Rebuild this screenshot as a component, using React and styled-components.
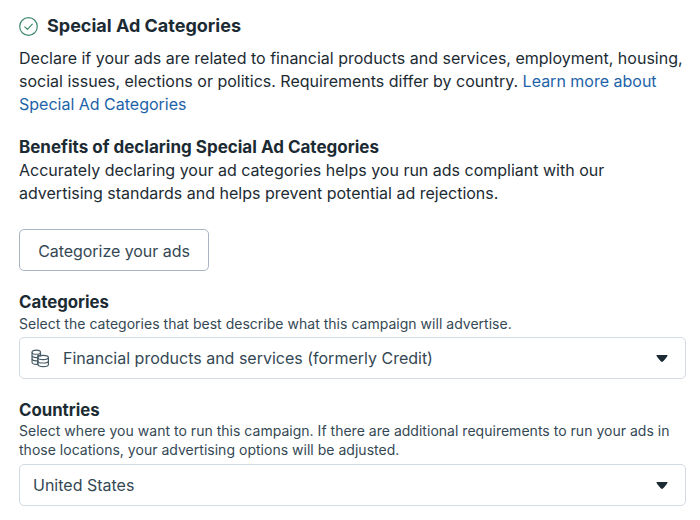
import React from 'react'
import styled, { createGlobalStyle } from 'styled-components'

const GlobalStyle = createGlobalStyle`
  html, body {
    margin: 0;
    background: #fff;
  }
  body {
    font-family: Inter, "Liberation Sans", sans-serif;
    color: #1c2b33;
  }
`

const CheckIcon = () => (
  <svg width="19" height="19" viewBox="0 0 19 19" fill="none">
    <circle cx="9.5" cy="9.5" r="8.8" stroke="#3f8a6c" strokeWidth="1.2" />
    <path d="M5.800 9.800l2.600 2.600 4.900-5.200" stroke="#3f8a6c" strokeWidth="1.200" strokeLinecap="round" strokeLinejoin="round" />
  </svg>
)

const CoinsIcon = () => (
  <svg width="19" height="19" viewBox="0 0 18 18" fill="none" stroke="#465a66" strokeWidth="1.1">
    <path d="M1 3C1 1.800 2.900 1 5 1s4 .8 4 2v3.200H6.500v8.300H5c-2.100 0-4-.8-4-2V3z" />
    <path d="M1 3c0 1.200 1.900 2 4 2s4-.8 4-2M1 6.200c0 1.100 1.900 1.900 4 1.900h1.500M1 9.300c0 1.100 1.900 1.900 4 1.900h1.500" />
    <path d="M6.500 8c0-1.200 2.100-2 5-2s5 .8 5 2v6.700c0 1.200-2.100 2-5 2s-5-.8-5-2V8z" />
    <path d="M6.500 8c0 1.200 2.100 2 5 2s5-.8 5-2M6.500 11.300c0 1.200 2.100 2 5 2s5-.8 5-2" />
  </svg>
)

const CaretIcon = () => (
  <svg width="12" height="7" viewBox="0 0 12 7">
    <path d="M.6 1.100C.3.500.6 0 1.200 0h9.600c.6 0 .9.500.6 1.100-.8 1.300-2.900 4.200-4.500 5.500-.5.400-1.300.4-1.800 0C3.500 5.300 1.400 2.400.6 1.100z" fill="#1c2b33" />
  </svg>
)

const Page = styled.div`
  width: 700px;
  height: 520px;
  overflow: hidden;
  box-sizing: border-box;
  padding: 15px 14px 0 19px;
`
const Header = styled.div`
  display: flex;
  align-items: center;
  gap: 9px;
  height: 22px;
`
const Title = styled.h2`
  margin: 0;
  font-size: 18px;
  line-height: 22px;
  font-weight: 700;
`
const Paragraph = styled.p`
  margin: ${props => props.$top || 0}px 0 0;
  max-width: ${props => props.$max || 667}px;
  font-size: 16px;
  line-height: 23px;
`
const Link = styled.a`
  color: #1d63a8;
  text-decoration: none;
`
const SubHeading = styled.h3`
  margin: 20px 0 0;
  font-size: 17px;
  line-height: 23px;
  font-weight: 700;
`
const Button = styled.button`
  display: block;
  margin-top: 24px;
  width: 190px;
  height: 42px;
  padding: 1px 0 0;
  background: #fff;
  border: 1px solid #a9b5c4;
  border-radius: 5px;
  font-family: inherit;
  font-size: 16px;
  font-weight: 400;
  letter-spacing: -0.05px;
  color: #344854;
`
const Field = styled.section`
  margin-top: ${props => props.$top}px;
`
const Label = styled.div`
  font-size: 16.8px;
  line-height: 20px;
  font-weight: 700;
`
const Hint = styled.div`
  margin-top: ${props => props.$top}px;
  font-size: 14px;
  line-height: 19px;
  letter-spacing: 0.02px;
  color: #344854;
`
const Select = styled.div`
  display: flex;
  align-items: center;
  gap: 13px;
  height: 40px;
  margin-top: ${props => props.$top}px;
  padding: 0 17px 0 ${props => props.$pad}px;
  border: 1px solid #d4dae2;
  border-radius: 5px;
  font-size: 16px;
  color: #344854;
`
const SelectText = styled.span`
  flex: 1;
`

export default function App() {
  return (
    <Page>
      <GlobalStyle />
      <Header>
        <CheckIcon />
        <Title>Special Ad Categories</Title>
      </Header>
      <Paragraph $top={10}>
        Declare if your ads are related to financial products and services, employment, housing,
        social issues, elections or politics. Requirements differ by country.{' '}
        <Link>Learn more about Special Ad Categories</Link>
      </Paragraph>
      <SubHeading>Benefits of declaring Special Ad Categories</SubHeading>
      <Paragraph $max={640}>
        Accurately declaring your ad categories helps you run ads compliant with our
        advertising standards and helps prevent potential ad rejections.
      </Paragraph>
      <Button>Categorize your ads</Button>
      <Field $top={21}>
        <Label>Categories</Label>
        <Hint $top={2}>Select the categories that best describe what this campaign will advertise.</Hint>
        <Select $pad={11} $top={4}>
          <CoinsIcon />
          <SelectText>Financial products and services (formerly Credit)</SelectText>
          <CaretIcon />
        </Select>
      </Field>
      <Field $top={21}>
        <Label>Countries</Label>
        <Hint $top={1}>
          Select where you want to run this campaign. If there are additional requirements to run your ads in
          those locations, your advertising options will be adjusted.
        </Hint>
        <Select $pad={13} $top={5}>
          <SelectText>United States</SelectText>
          <CaretIcon />
        </Select>
      </Field>
    </Page>
  )
}
